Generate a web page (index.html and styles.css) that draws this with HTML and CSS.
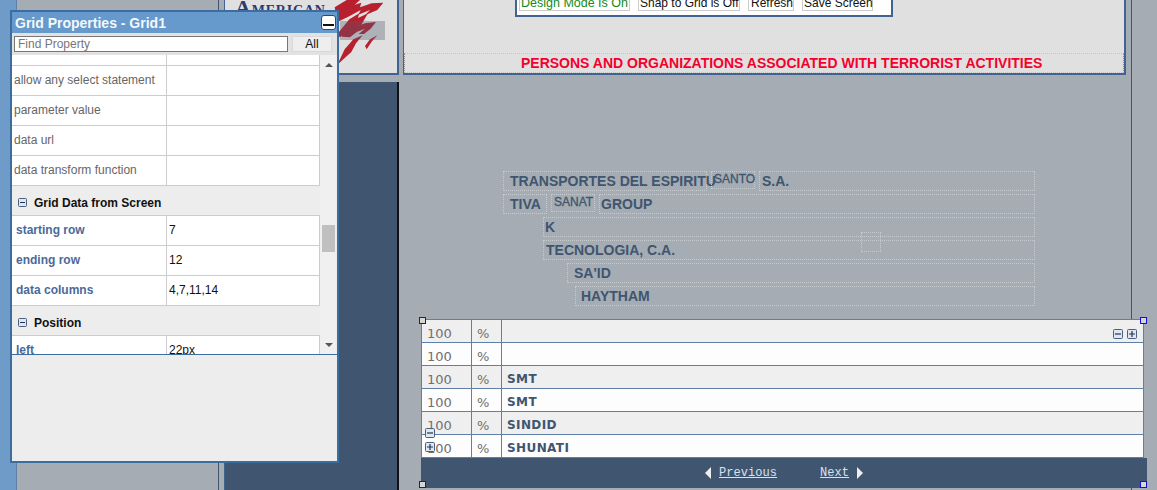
FILE: index.html
```html
<!DOCTYPE html>
<html lang="en">
<head>
<meta charset="utf-8">
<title>Grid Properties</title>
<link rel="stylesheet" href="styles.css">
</head>
<body>
<div class="page">
  <div class="edge"></div>
  <div class="gutter"></div>
  <div class="sidecol">
    <div class="logo">
      <span class="logo-text">AMERICAN</span>
      <svg class="logo-art" width="70" height="76" viewBox="0 0 210 228">
        <path fill="#b9202e" d="M14 22 L50 0 L90 0 L74 14 L94 8 L90 22 L125 10 L160 8 L142 30 L105 46 L120 30 L85 44 L92 30 L55 50 L22 66Z"/>
        <path fill="#b9202e" d="M20 104 L58 58 L88 40 L84 54 L114 40 L94 74 L60 88 L30 112Z"/>
        <path fill="#b9202e" d="M36 85 L75 70 L82 78 L105 70 L138 66 L122 86 L102 102 L86 102 L105 86 L80 96 L60 112 L36 110Z"/>
        <path fill="#b9202e" d="M22 194 L44 148 L70 118 L98 106 L78 130 L64 156 L40 178Z"/>
        <path fill="#b9202e" d="M105 138 L120 118 L142 106 L126 124 L110 148Z"/>
      </svg>
      <div class="logo-glass"></div>
    </div>
    <div class="sidefill"></div>
  </div>
  <main class="stage">
    <section class="topscreen">
      <div class="toolbar">
        <span class="tool tool-on">Design Mode Is On</span>
        <span class="tool tool-snap">Snap to Grid is Off</span>
        <span class="tool tool-refresh">Refresh</span>
        <span class="tool tool-save">Save Screen</span>
      </div>
      <h1 class="headline">PERSONS AND ORGANIZATIONS ASSOCIATED WITH TERRORIST ACTIVITIES</h1>
    </section>

    <span class="lbl l1a">TRANSPORTES DEL ESPIRITU</span>
    <span class="lbl lbl-small l1b">SANTO</span>
    <span class="lbl l1c">S.A.</span>
    <span class="lbl l2a">TIVA</span>
    <span class="lbl lbl-small l2b">SANAT</span>
    <span class="lbl l2c">GROUP</span>
    <span class="lbl l3">K</span>
    <span class="lbl l4">TECNOLOGIA, C.A.</span>
    <span class="lbl l5">SA'ID</span>
    <span class="lbl l6">HAYTHAM</span>
    <span class="lbl l7"></span>

    <div class="grid1">
      <div class="grow shade"><span class="c1">100</span><span class="c2">%</span><span class="c3"></span></div>
      <div class="grow"><span class="c1">100</span><span class="c2">%</span><span class="c3"></span></div>
      <div class="grow shade"><span class="c1">100</span><span class="c2">%</span><span class="c3">SMT</span></div>
      <div class="grow"><span class="c1">100</span><span class="c2">%</span><span class="c3">SMT</span></div>
      <div class="grow shade"><span class="c1">100</span><span class="c2">%</span><span class="c3">SINDID</span></div>
      <div class="grow"><span class="c1">100</span><span class="c2">%</span><span class="c3">SHUNATI</span></div>
      <div class="pager">
        <span class="tri tri-left"></span><a class="plink plink-prev" href="#">Previous</a>
        <a class="plink plink-next" href="#">Next</a><span class="tri tri-right"></span>
      </div>
    </div>

    <span class="ico ico-a"><svg width="10" height="10" viewBox="0 0 10 10"><rect x=".5" y=".5" width="9" height="9" rx="1" fill="#dfe7f2" stroke="#4a5f80"/><path d="M2 5h6" stroke="#24344e" stroke-width="1.2"/></svg></span>
    <span class="ico ico-b"><svg width="10" height="10" viewBox="0 0 10 10"><rect x=".5" y=".5" width="9" height="9" rx="1" fill="#dfe7f2" stroke="#4a5f80"/><path d="M2 5h6M5 2v6" stroke="#24344e" stroke-width="1.2"/></svg></span>
    <span class="ico ico-c"><svg width="10" height="10" viewBox="0 0 10 10"><rect x=".5" y=".5" width="9" height="9" rx="1" fill="#dfe7f2" stroke="#4a5f80"/><path d="M2 5h6" stroke="#24344e" stroke-width="1.2"/></svg></span>
    <span class="ico ico-d"><svg width="10" height="10" viewBox="0 0 10 10"><rect x=".5" y=".5" width="9" height="9" rx="1" fill="#dfe7f2" stroke="#4a5f80"/><path d="M2 5h6M5 2v6" stroke="#24344e" stroke-width="1.2"/></svg></span>

    <span class="handle h-tl"></span>
    <span class="handle h-tr"></span>
    <span class="handle h-bl"></span>
    <span class="handle h-br"></span>
  </main>
  <div class="rightrail"></div>
</div>

<aside class="props">
  <header class="props-title">
    <span>Grid Properties - Grid1</span>
    <span class="minbtn"><span class="minbar"></span></span>
  </header>
  <div class="props-search">
    <input class="find" type="text" placeholder="Find Property">
    <span class="allbtn">All</span>
  </div>
  <div class="props-body">
    <div class="props-list">
      <div class="prow prow-stub"><span class="pk"></span><span class="pv"></span></div>
      <div class="prow"><span class="pk">allow any select statement</span><span class="pv"></span></div>
      <div class="prow"><span class="pk">parameter value</span><span class="pv"></span></div>
      <div class="prow"><span class="pk">data url</span><span class="pv"></span></div>
      <div class="prow"><span class="pk">data transform function</span><span class="pv"></span></div>
      <div class="pgroup"><svg width="10" height="10" viewBox="0 0 10 10"><rect x=".5" y=".5" width="8" height="8" rx="1" fill="#dfe7f2" stroke="#4a5f80"/><path d="M2 4.5h5" stroke="#24344e"/></svg>Grid Data from Screen</div>
      <div class="prow prow-set"><span class="pk">starting row</span><span class="pv">7</span></div>
      <div class="prow prow-set"><span class="pk">ending row</span><span class="pv">12</span></div>
      <div class="prow prow-set"><span class="pk">data columns</span><span class="pv">4,7,11,14</span></div>
      <div class="pgroup"><svg width="10" height="10" viewBox="0 0 10 10"><rect x=".5" y=".5" width="8" height="8" rx="1" fill="#dfe7f2" stroke="#4a5f80"/><path d="M2 4.5h5" stroke="#24344e"/></svg>Position</div>
      <div class="prow prow-set"><span class="pk">left</span><span class="pv">22px</span></div>
    </div>
    <div class="pscroll">
      <span class="arrow arrow-up"></span>
      <span class="thumb"></span>
      <span class="arrow arrow-down"></span>
    </div>
  </div>
  <div class="props-foot"></div>
</aside>
</body>
</html>
```

FILE: styles.css
```css
* { box-sizing: border-box; }
html, body { margin: 0; height: 490px; overflow: hidden; }
body { font-family: "Liberation Sans", Arial, sans-serif; position: relative; background: #a5acb3; }

.page { display: flex; width: 1157px; height: 490px; }
.edge { width: 17px; background: #6f9bc8; border-right: 1px solid #5f7ea8; }
.gutter { position: relative; width: 208px; background: #a5acb3; border-right: 1px solid #40638f; }
.gutter::after { content: ""; position: absolute; left: 201px; top: 0; bottom: 0; width: 1px; background: #40556f; }
.sidecol { width: 175px; padding-right: 1px; display: flex; flex-direction: column; }
.logo { position: relative; height: 75px; background: #e0e0e0; border-bottom: 2px solid #40638f; border-right: 2px solid #40638f; overflow: hidden; }
.logo-text { position: absolute; left: 10px; top: -1px; font: bold 14px/18px "Liberation Serif", serif; letter-spacing: .8px; color: #2b3a70; white-space: nowrap; }
.logo-text::first-letter { font-size: 22px; }
.logo-art { position: absolute; left: 105px; top: 0; }
.logo-glass { position: absolute; left: 115px; top: 21px; width: 45px; height: 19px; background: rgba(80, 90, 105, .35); }
.sidefill { flex: 1; margin-top: 7px; background: #40556f; border-right: 2px solid #111; }

.stage { position: relative; width: 731px; background: #a5acb3; }
.rightrail { flex: 1; background: #a5acb3; border-left: 1px solid #40556f; }

.topscreen { position: absolute; left: 3px; top: 0; width: 723px; height: 75px; background: #e0e0e0; border: 2px solid #40638f; border-width: 0 2px 2px 1px; }
.toolbar { position: absolute; left: 111px; top: 0; width: 378px; height: 17px; background: #fff; border: 2px solid #40638f; border-top: 0; }
.tool { position: absolute; top: 0; height: 11px; line-height: 6px; font-size: 12px; background: #fff; border: 1px solid #ccc; border-top: 0; padding: 0 1px; white-space: nowrap; color: #111; }
.tool-on { left: 2px; width: 111px; color: #158a15; font-size: 12.5px; }
.tool-snap { left: 121px; width: 102px; }
.tool-refresh { left: 231px; width: 46px; padding-left: 2px; }
.tool-save { left: 285px; width: 71px; }
.headline { position: absolute; left: 0; right: 0; top: 53px; height: 20px; margin: 0; border-top: 1px dotted #c4c4c4; border-left: 1px dotted #888; border-right: 1px dotted #888; border-bottom: 1px dotted #c4c4c4; font-size: 14px; line-height: 18px; font-weight: bold; color: #f5002d; padding-left: 116px; white-space: nowrap; }

.lbl { position: absolute; height: 20px; border: 1px dotted #c6cbd0; font-size: 14px; font-weight: bold; line-height: 18px; color: #40556f; padding-left: 6px; white-space: nowrap; }
.lbl-small { font-size: 12px; line-height: 15px; height: 18px; padding-left: 2px; font-weight: normal; -webkit-text-stroke: .3px #40556f; }
.l1a { left: 103px; top: 171px; width: 204px; }
.l1b { left: 311px; top: 171px; width: 44px; }
.l1c { left: 359px; top: 171px; width: 276px; padding-left: 2px; }
.l2a { left: 103px; top: 194px; width: 44px; }
.l2b { left: 151px; top: 194px; width: 44px; }
.l2c { left: 199px; top: 194px; width: 436px; padding-left: 1px; }
.l3 { left: 143px; top: 217px; width: 492px; padding-left: 1px; }
.l4 { left: 143px; top: 240px; width: 492px; padding-left: 2px; }
.l5 { left: 167px; top: 263px; width: 468px; }
.l6 { left: 175px; top: 286px; width: 460px; padding-left: 5px; }
.l7 { left: 461px; top: 232px; width: 20px; height: 20px; padding: 0; }

.grid1 { position: absolute; left: 21px; top: 319px; width: 723px; border: 1px solid #5f7ea8; border-bottom: 0; font-family: "DejaVu Sans", Verdana, sans-serif; }
.grow { display: flex; height: 23px; background: #fdfdfd; border-bottom: 1px solid #5f7ea8; }
.grow.shade { background: #efefef; }
.c1, .c2, .c3 { display: block; line-height: 27px; font-size: 13px; color: #6f6f6f; white-space: nowrap; }
.c1 { width: 50px; padding-left: 5px; border-right: 1px solid #5f7ea8; }
.c2 { width: 30px; padding-left: 5px; border-right: 1px solid #5f7ea8; }
.c3 { flex: 1; padding-left: 5px; font-weight: bold; font-size: 12px; letter-spacing: .4px; line-height: 26px; color: #40556f; }
.pager { display: flex; align-items: center; height: 30px; margin: 0 -4px 0 -1px; padding-left: 284px; background: #40556f; }
.tri { width: 0; height: 0; border-top: 6px solid transparent; border-bottom: 6px solid transparent; }
.tri-left { border-right: 6px solid #eee; margin-right: 8px; }
.tri-right { border-left: 6px solid #eee; margin-left: 8px; }
.plink { font: 12px "Liberation Mono", "Courier New", monospace; letter-spacing: .05px; color: #d8e2f0; text-decoration: underline; }
.plink-next { margin-left: 43px; }

.ico { position: absolute; display: block; width: 10px; height: 10px; line-height: 0; }
.ico-a { left: 713px; top: 329px; }
.ico-b { left: 727px; top: 329px; }
.ico-c { left: 25px; top: 428px; }
.ico-d { left: 25px; top: 442px; }

.handle { position: absolute; width: 7px; height: 7px; background: #d6d6d6; border: 1px solid #1111dd; }
.h-tl { left: 19px; top: 317px; }
.h-tr { left: 740px; top: 317px; }
.h-bl { left: 19px; top: 481px; }
.h-br { left: 740px; top: 481px; }

.props { position: absolute; left: 10px; top: 10px; width: 329px; height: 453px; display: flex; flex-direction: column; background: #ededed; border: 2px solid #3d6c9e; }
.props-title { display: flex; justify-content: space-between; align-items: center; height: 21px; padding: 0 1px 0 3px; background: #6699cc; color: #f4f7fb; font-size: 14px; font-weight: bold; flex: none; }
.minbtn { display: flex; align-items: flex-end; justify-content: center; width: 15px; height: 15px; padding-bottom: 3px; background: #fff; border: 1px solid #234a78; border-radius: 3px; }
.minbar { display: block; width: 11px; height: 2px; background: #111; }
.props-search { display: flex; gap: 4px; align-items: center; height: 22px; padding: 0 4px 0 2px; background: #e2e2e2; flex: none; }
.find { width: 274px; height: 16px; padding: 0 3px; border: 1px solid #777; background: #fff; font: 12px "Liberation Sans", Arial, sans-serif; outline: none; }
.find::placeholder { color: #777; opacity: 1; }
.allbtn { width: 40px; height: 16px; background: #eee; border: 1px solid #d8d8d8; font-size: 12px; line-height: 14px; text-align: center; color: #111; }
.props-body { display: flex; height: 300px; background: #ededed; border-bottom: 1px solid #3d6c9e; overflow: hidden; flex: none; }
.props-list { width: 308px; background: #ededed; }
.prow { display: flex; height: 30px; background: #fff; border-bottom: 1px solid #ccc; border-right: 1px solid #ccc; }
.prow-stub { height: 11px; }
.pk { width: 155px; padding-left: 2px; border-right: 1px solid #ccc; font-size: 12px; line-height: 29px; color: #666; white-space: nowrap; }
.pv { flex: 1; padding-left: 2px; font-size: 12px; line-height: 29px; color: #111; }
.prow-set .pk { padding-left: 4px; color: #4a6a9a; font-weight: bold; }
.pgroup { display: flex; align-items: center; gap: 6px; height: 30px; padding: 4px 0 0 6px; background: #ededed; border-bottom: 1px solid #ccc; font-size: 12px; font-weight: bold; color: #111; }
.pscroll { position: relative; width: 16px; background: #f0f0f0; }
.arrow { position: absolute; left: 5px; width: 0; height: 0; border-left: 4px solid transparent; border-right: 4px solid transparent; }
.arrow-up { top: 8px; border-bottom: 4px solid #555; }
.arrow-down { top: 288px; border-top: 4px solid #555; }
.thumb { position: absolute; left: 2px; top: 170px; width: 13px; height: 27px; background: #c0c0c0; }
.props-foot { flex: 1; background: #ededed; }
```
